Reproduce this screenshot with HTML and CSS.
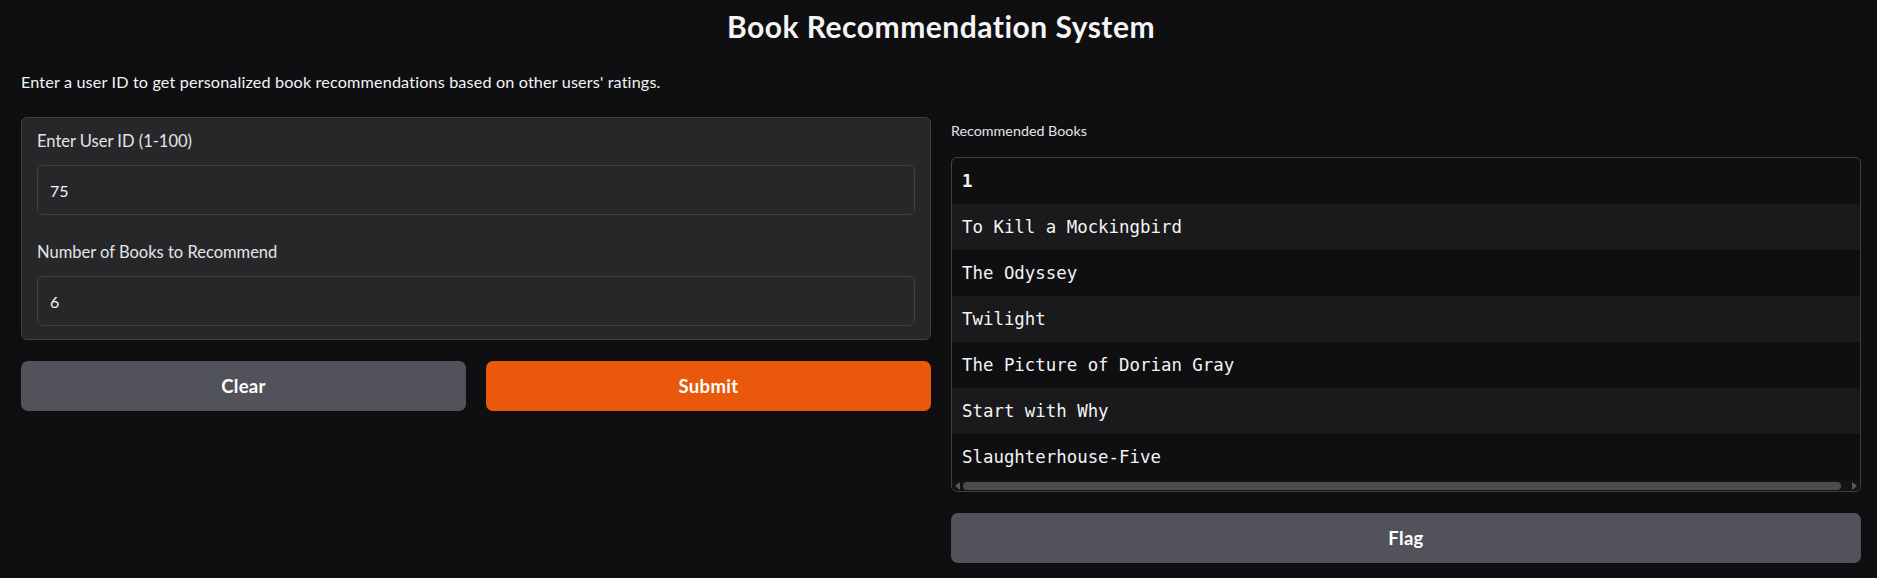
FILE: index.html
```html
<!DOCTYPE html>
<html lang="en">
<head>
<meta charset="utf-8">
<title>Book Recommendation System</title>
<link rel="stylesheet" href="styles.css">
</head>
<body>
<div class="app">
  <h1 class="title">Book Recommendation System</h1>
  <p class="desc">Enter a user ID to get personalized book recommendations based on other users' ratings.</p>
  <div class="main">
    <div class="col">
      <div class="form">
        <div class="field">
          <label class="lbl">Enter User ID (1-100)</label>
          <input class="input" type="text" value="75">
        </div>
        <div class="field">
          <label class="lbl">Number of Books to Recommend</label>
          <input class="input" type="text" value="6">
        </div>
      </div>
      <div class="btn-row">
        <button class="btn secondary">Clear</button>
        <button class="btn primary">Submit</button>
      </div>
    </div>
    <div class="col">
      <div class="out-block">
        <span class="out-label">Recommended Books</span>
        <div class="table-wrap">
          <div class="row head">1</div>
          <div class="row odd">To Kill a Mockingbird</div>
          <div class="row">The Odyssey</div>
          <div class="row odd">Twilight</div>
          <div class="row">The Picture of Dorian Gray</div>
          <div class="row odd">Start with Why</div>
          <div class="row">Slaughterhouse-Five</div>
          <div class="hscroll">
            <span class="arrow left"></span>
            <span class="thumb"></span>
            <span class="arrow right"></span>
          </div>
        </div>
      </div>
      <button class="btn secondary">Flag</button>
    </div>
  </div>
</div>
</body>
</html>
```

FILE: styles.css
```css
html, body {
  margin: 0;
  padding: 0;
  background: #0f0f11;
}
body {
  font-family: Lato, "Noto Sans", sans-serif;
  color: #f4f4f5;
}
.app {
  padding: 9px 16px 0 21px;
  display: flex;
  flex-direction: column;
}
.title {
  margin: 0;
  text-align: center;
  font-size: 30px;
  line-height: 34px;
  letter-spacing: 0.5px;
  font-weight: 700;
  color: #f4f4f5;
}
.desc {
  margin: 29px 0 0 0;
  font-size: 16.2px;
  line-height: 20px;
  letter-spacing: 0.15px;
}
.main {
  margin-top: 25px;
  display: grid;
  grid-template-columns: 1fr 1fr;
  gap: 20px;
}
.col {
  display: flex;
  flex-direction: column;
  gap: 21px;
}
.form {
  background: #27272a;
  border: 1px solid #3f3f46;
  border-radius: 6px;
  padding: 13px 15px 13px;
  display: flex;
  flex-direction: column;
  gap: 27px;
}
.field {
  display: flex;
  flex-direction: column;
  gap: 14px;
}
.lbl {
  font-size: 16.5px;
  line-height: 20px;
  color: #e4e4e7;
}
.input {
  box-sizing: border-box;
  height: 50px;
  margin: 0;
  background: #27272a;
  border: 1px solid #3f3f46;
  border-radius: 6px;
  padding: 0 12px;
  font-family: Lato, "Noto Sans", sans-serif;
  font-size: 16px;
  color: #f4f4f5;
  outline: none;
}
.btn-row {
  display: grid;
  grid-template-columns: 1fr 1fr;
  gap: 20px;
}
.btn {
  height: 50px;
  border: none;
  border-radius: 7px;
  font-family: Lato, "Noto Sans", sans-serif;
  font-weight: 700;
  font-size: 18.5px;
  letter-spacing: 0.3px;
  color: #ffffff;
  cursor: pointer;
}
.secondary {
  background: #52525b;
}
.primary {
  background: #ea580c;
}
.out-block {
  padding-top: 6px;
  display: flex;
  flex-direction: column;
  gap: 18px;
}
.out-label {
  font-size: 14.3px;
  line-height: 16px;
  color: #e4e4e7;
}
.table-wrap {
  border: 1px solid #3f3f46;
  border-radius: 6px;
  overflow: hidden;
  background: #0f0f11;
}
.row {
  height: 46px;
  display: flex;
  align-items: center;
  padding-left: 10px;
  font-family: "DejaVu Sans Mono", "Liberation Mono", monospace;
  font-size: 17.4px;
  color: #f4f4f5;
  white-space: nowrap;
}
.row.head {
  font-weight: 700;
}
.row.odd {
  background: #1a1a1d;
}
.hscroll {
  height: 11px;
  display: flex;
  align-items: center;
  gap: 3px;
  padding: 0 3px 0 3px;
  background: #141416;
}
.thumb {
  flex: 1;
  height: 8px;
  border-radius: 4px;
  background: #4d4d4f;
  margin-right: 8px;
}
.arrow {
  width: 0;
  height: 0;
  border-top: 4px solid transparent;
  border-bottom: 4px solid transparent;
}
.arrow.left {
  border-right: 5px solid #5a5a5c;
}
.arrow.right {
  border-left: 5px solid #5a5a5c;
}
```
